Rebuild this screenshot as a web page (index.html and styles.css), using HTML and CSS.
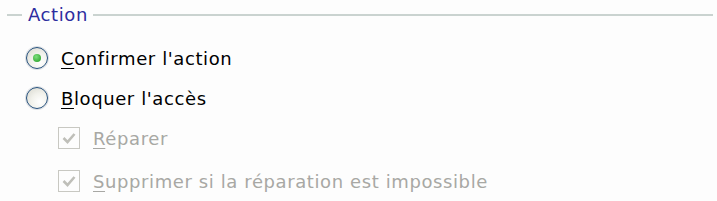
FILE: index.html
```html
<!DOCTYPE html>
<html lang="fr">
<head>
    <meta charset="UTF-8">
    <title>Action</title>
    <link rel="stylesheet" href="styles.css">
</head>
<body>
    <fieldset class="group">
        <legend>Action</legend>
        <div class="row">
            <span class="radio checked"><span class="dot"></span></span>
            <span class="label"><u>C</u>onfirmer l'action</span>
        </div>
        <div class="row">
            <span class="radio"></span>
            <span class="label"><u>B</u>loquer l'accès</span>
        </div>
        <div class="row sub disabled">
            <span class="check"><svg width="14" height="12" viewBox="0 0 14 12"><path d="M1.5 6 L5.5 10 L12.5 2" fill="none" stroke="#bfbfb9" stroke-width="2.6"/></svg></span>
            <span class="label"><u>R</u>éparer</span>
        </div>
        <div class="row sub disabled last">
            <span class="check"><svg width="14" height="12" viewBox="0 0 14 12"><path d="M1.5 6 L5.5 10 L12.5 2" fill="none" stroke="#bfbfb9" stroke-width="2.6"/></svg></span>
            <span class="label"><u>S</u>upprimer si la réparation est impossible</span>
        </div>
    </fieldset>
</body>
</html>
```

FILE: styles.css
```css
* {
    box-sizing: border-box;
}

body {
    margin: 0;
    padding: 4px 4px 0 7px;
    background-color: #fdfdfd;
    font-family: "DejaVu Sans", Tahoma, sans-serif;
    font-size: 18px;
    letter-spacing: 0.6px;
    color: #000000;
}

.group {
    margin: 0;
    padding: 13px 0 0 0;
    border: none;
    border-top: 2px solid #cad3d0;
}

.group legend {
    margin-left: 15px;
    padding: 0 5px 0 6px;
    line-height: 21px;
    color: #2d2da0;
}

.row {
    display: flex;
    align-items: center;
    height: 40px;
    padding-left: 19px;
}

.row.sub {
    padding-left: 51px;
}

.row.last {
    margin-top: 3px;
}

.radio {
    width: 22px;
    height: 22px;
    flex-shrink: 0;
    border-radius: 50%;
    border: 1px solid #25507c;
    box-shadow: 0 0 0 1px rgba(160, 170, 180, 0.35);
    background: radial-gradient(circle at 65% 70%, #ffffff 0%, #f2f2ec 45%, #d6d6cd 100%);
    display: flex;
    align-items: center;
    justify-content: center;
    margin-right: 13px;
}

.radio .dot {
    width: 8px;
    height: 8px;
    border-radius: 50%;
    background: radial-gradient(circle at 40% 35%, #7ee07e, #1f9a1f);
}

.check {
    width: 22px;
    height: 22px;
    flex-shrink: 0;
    border: 1px solid #c8c8c2;
    background: #fdfdfd;
    display: flex;
    align-items: center;
    justify-content: center;
    margin-right: 13px;
}

.disabled .label {
    color: #a8a8a4;
}

.label u {
    text-underline-offset: 3px;
}
```
